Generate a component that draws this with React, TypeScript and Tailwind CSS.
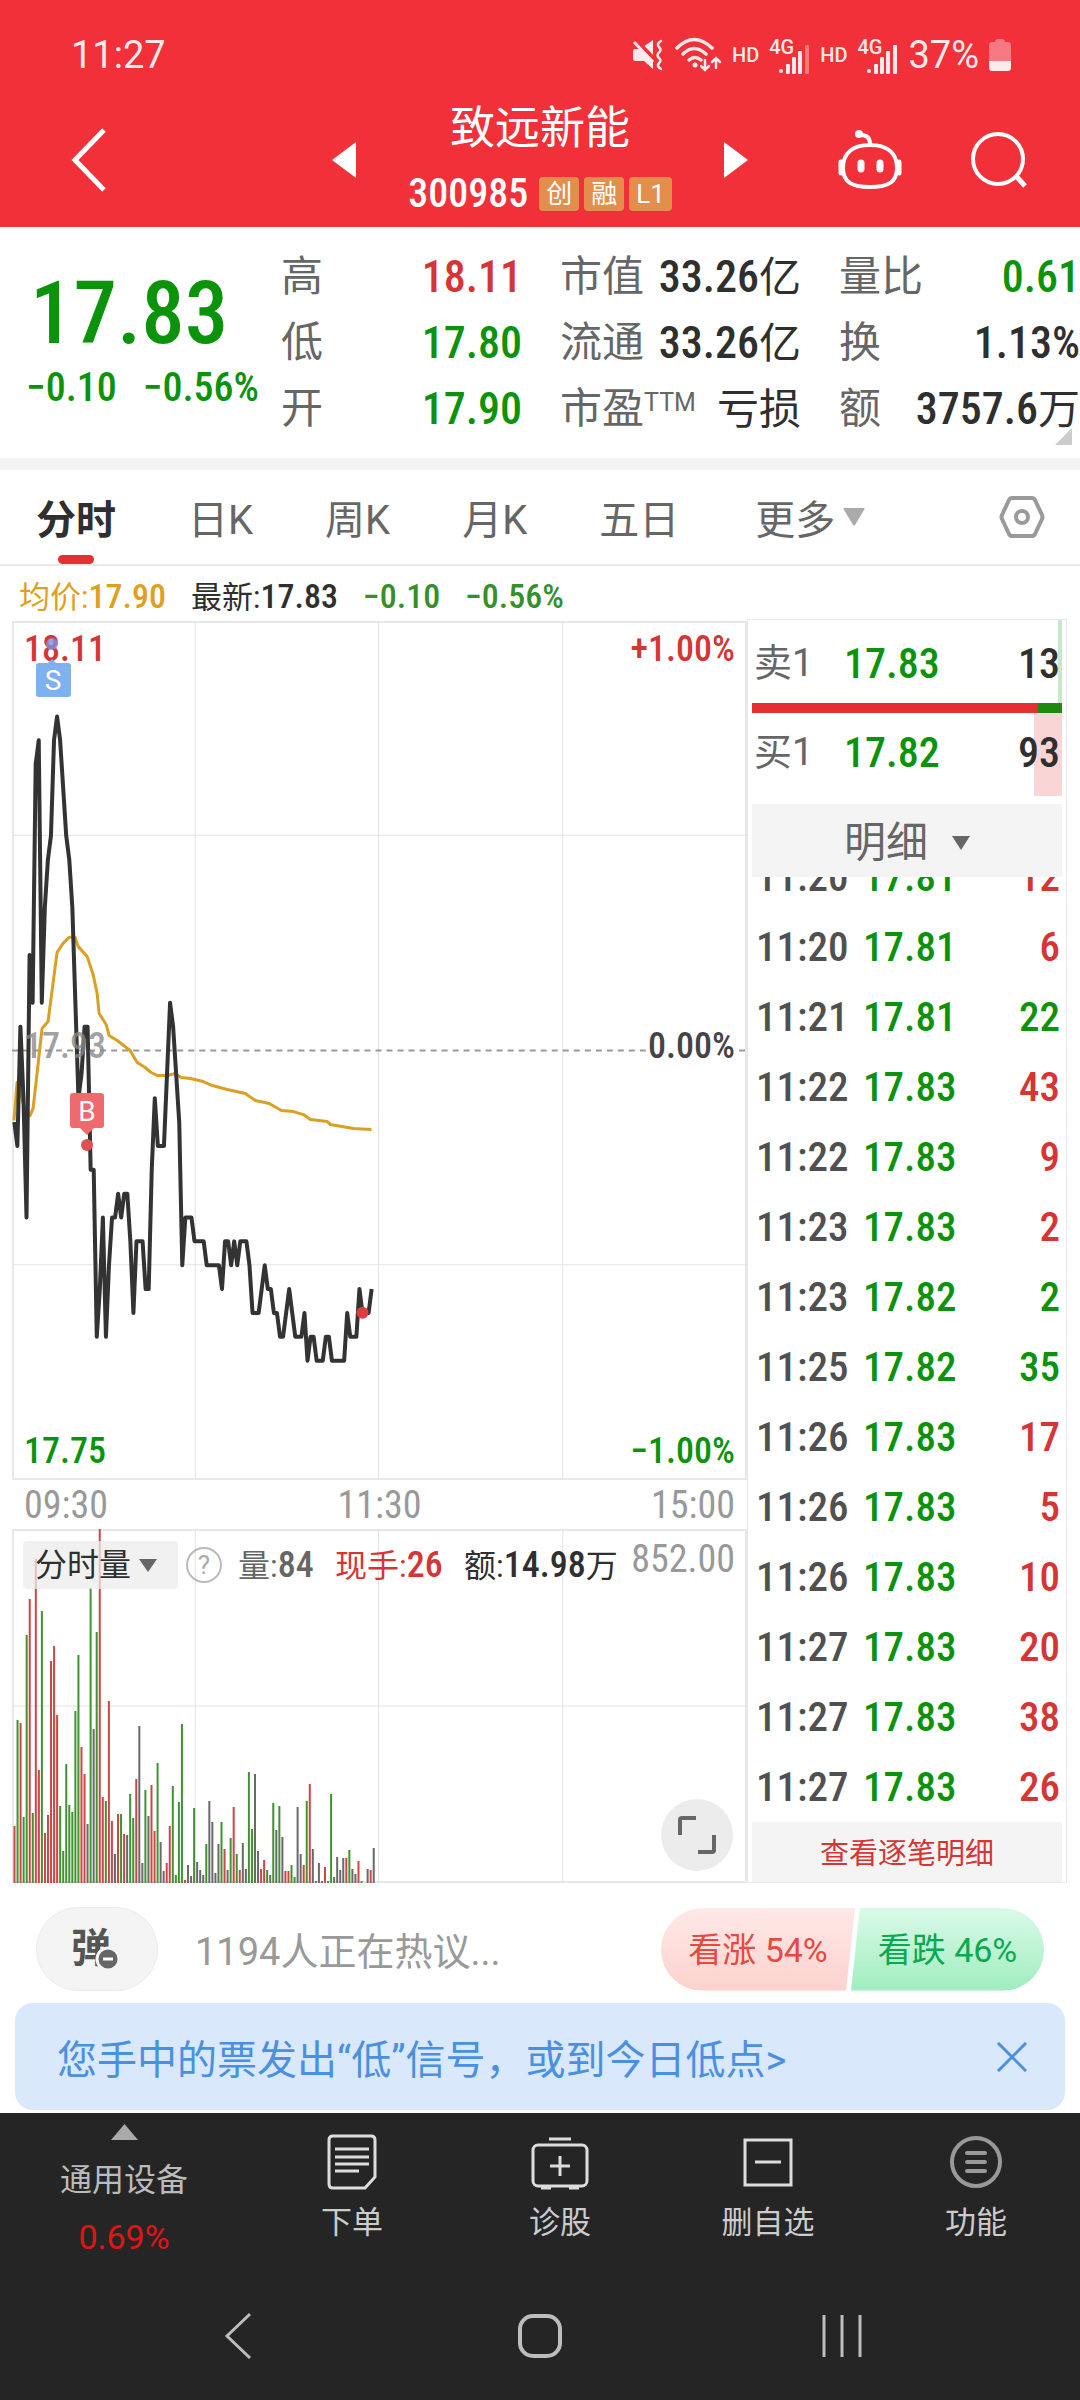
import React, { useState } from 'react';
import { clsx } from 'clsx';

type Tone = 'up' | 'down' | 'flat';

interface Quote {
    label: string;
    sup?: string;
    value: string;
    unit?: string;
    tone: Tone;
}

interface Trade {
    time: string;
    price: string;
    qty: number;
    tone: Tone;
}

const NUM = "font-['Roboto_Condensed','Roboto','Noto_Sans_CJK_SC',sans-serif]";

const toneClass: Record<Tone, string> = {
    up: 'text-[#d63535]',
    down: 'text-[#0b930b]',
    flat: 'text-[#2f2f2f]',
};

const quoteColumns: Quote[][] = [
    [
        { label: '高', value: '18.11', tone: 'up' },
        { label: '低', value: '17.80', tone: 'down' },
        { label: '开', value: '17.90', tone: 'down' },
    ],
    [
        { label: '市值', value: '33.26', unit: '亿', tone: 'flat' },
        { label: '流通', value: '33.26', unit: '亿', tone: 'flat' },
        { label: '市盈', sup: 'TTM', value: '', unit: '亏损', tone: 'flat' },
    ],
    [
        { label: '量比', value: '0.61', tone: 'down' },
        { label: '换', value: '1.13%', tone: 'flat' },
        { label: '额', value: '3757.6', unit: '万', tone: 'flat' },
    ],
];

const tabs = ['分时', '日K', '周K', '月K', '五日'];

const trades: Trade[] = [
    { time: '11:20', price: '17.81', qty: 12, tone: 'up' },
    { time: '11:20', price: '17.81', qty: 6, tone: 'up' },
    { time: '11:21', price: '17.81', qty: 22, tone: 'down' },
    { time: '11:22', price: '17.83', qty: 43, tone: 'up' },
    { time: '11:22', price: '17.83', qty: 9, tone: 'up' },
    { time: '11:23', price: '17.83', qty: 2, tone: 'up' },
    { time: '11:23', price: '17.82', qty: 2, tone: 'down' },
    { time: '11:25', price: '17.82', qty: 35, tone: 'down' },
    { time: '11:26', price: '17.83', qty: 17, tone: 'up' },
    { time: '11:26', price: '17.83', qty: 5, tone: 'up' },
    { time: '11:26', price: '17.83', qty: 10, tone: 'up' },
    { time: '11:27', price: '17.83', qty: 20, tone: 'up' },
    { time: '11:27', price: '17.83', qty: 38, tone: 'up' },
    { time: '11:27', price: '17.83', qty: 26, tone: 'up' },
];

// One price per minute from 09:30, in cents
const prices = [
    1790, 1789, 1794, 1791, 1786, 1797, 1795, 1805, 1806, 1795, 1799, 1801, 1802, 1806, 1807, 1806, 1804, 1802, 1801, 1799,
    1795, 1791, 1792, 1794, 1794, 1788, 1788, 1781, 1783, 1786, 1781, 1784, 1786, 1786, 1787, 1786, 1787, 1787, 1785, 1782,
    1785, 1785, 1785, 1783, 1783, 1788, 1791, 1789, 1789, 1789, 1792, 1795, 1794, 1792, 1790, 1784, 1786, 1786, 1786, 1785,
    1785, 1785, 1785, 1784, 1784, 1784, 1784, 1784, 1783, 1785, 1785, 1784, 1785, 1784, 1785, 1785, 1785, 1784, 1782, 1782,
    1782, 1783, 1784, 1783, 1783, 1782, 1782, 1781, 1781, 1782, 1783, 1782, 1781, 1781, 1781, 1782, 1780, 1781, 1781, 1780,
    1780, 1780, 1781, 1781, 1780, 1780, 1780, 1780, 1780, 1782, 1781, 1781, 1781, 1783, 1782, 1782, 1782, 1783,
];

const average =
    '2,499 5,461 8,469 13,489 18,494 21,487 24,461 30,407 36,400 45,331 51,322 57,316 63,316 66,325 75,335 81,353 85,372 87,392 94,403 97,414 105,419 118,429 125,441 133,446 139,451 145,454 155,454 163,452 169,456 178,457 191,460 200,464 215,468 233,472 243,479 257,482 269,489 281,490 291,493 298,498 315,500 318,503 341,507 359,508';

// r = up, g = down, d = unchanged
const volumes = (
    'r57 g163 r160 g66 g248 r284 g70 r324 r113 g272 r50 r68 r222 r237 r168 g77 g32 g119 g78 g71 ' +
    'g172 g228 r136 r109 d59 g295 d154 g251 r355 r86 g82 r182 r62 d29 r69 g69 r49 d48 g89 g65 ' +
    'r104 d157 d20 g93 d67 r98 r52 g120 d41 d12 r20 r57 g97 g8 g81 g159 r3 d18 d7 g75 ' +
    'd21 d13 d8 g39 d82 d61 d10 d39 g61 r34 d13 g45 r76 g29 r13 d40 d14 g111 g54 d109 ' +
    'd32 r14 r23 g13 d8 g80 d53 g77 d46 r12 r12 g18 g6 d76 d29 r18 g82 r99 d34 d2 ' +
    'd20 d2 r16 g2 g89 d6 d26 d13 d25 r25 g33 d14 d9 r22 g2 d0 d14 r13 d35'
).split(' ');

const volumeFill: Record<string, string> = { r: '#d04545', g: '#3f9430', d: '#6a6a6a' };

const StatusBar = () => (
    <div className="h-[110px] pl-[71px] pr-[69px] flex items-center justify-between text-[#ffe9ea]">
        <span className="text-[38px] leading-none">11:27</span>
        <div className="flex items-center gap-[10px]">
            <svg width="32" height="32" viewBox="0 0 32 32" fill="currentColor">
                <path d="M1 12q0-2 2-2h5L21 1v29l-9-8H3q-2 0-2-2z" />
                <path d="M3 0l19 20" stroke="#f13039" strokeWidth="4" />
                <path d="M2 3l19 20" stroke="currentColor" strokeWidth="3" />
                <path d="M29 2q-5 3-2 6 3 3 0 5.500-3 2.500 0 5.500 3 2.500 0 5-3 3 2 6" fill="none" stroke="currentColor" strokeWidth="2.500" strokeLinecap="round" />
            </svg>
            <svg width="48" height="36" viewBox="0 0 48 36" fill="none" stroke="currentColor" strokeWidth="3.500" strokeLinecap="round">
                <path d="M3 11q17-17 35 0M9 17q11-11 23 0M15 23q6-5 12 0" />
                <circle cx="21" cy="28" r="2.500" fill="currentColor" stroke="none" />
                <path d="M31 23v10m-4-4l4 4 4-4M42 31V21m-4 4l4-4 4 4" strokeWidth="2.500" />
            </svg>
            <span className="text-[20px] leading-none font-medium">HD</span>
            <Signal weak />
            <span className="text-[20px] leading-none font-medium">HD</span>
            <Signal />
            <span className="text-[38px] leading-none">37%</span>
            <svg width="22" height="32" viewBox="0 0 22 32">
                <path d="M6 3q0-3 3-3h4q3 0 3 3h3q3 0 3 3v16H0V6q0-3 3-3z" fill="#f67880" />
                <path d="M0 22h22v7q0 3-3 3H3q-3 0-3-3z" fill="currentColor" />
            </svg>
        </div>
    </div>
);

const Signal: React.FC<{ weak?: boolean }> = ({ weak }) => (
    <div className="flex items-end h-[40px]">
        <span className="self-start text-[20px] leading-[24px] font-medium">4G</span>
        <svg className="-ml-[15px]" width="31" height="36" viewBox="9 0 31 36" fill="currentColor">
            <rect x="9" y="30" width="4" height="4" rx="2" />
            <rect x="16" y="25" width="4" height="10" rx="1" />
            <rect x="22" y="18" width="4" height="17" rx="1" />
            <rect x="28" y="12" width="4" height="23" rx="1" />
            <rect x="35" y="6" width="4" height="29" rx="1" opacity={weak ? 0.4 : 1} />
        </svg>
    </div>
);

const Header = () => (
    <header className="bg-[#f13039] text-white">
        <StatusBar />
        <div className="h-[117px] flex items-center justify-between pl-[69px] pr-[51px] pb-[18px]">
            <div className="w-[178px]">
                <button aria-label="返回" className="block">
                    <svg width="40" height="66" viewBox="0 0 40 66" fill="none" stroke="currentColor" strokeWidth="5">
                        <path d="M35 3L6 33l29 30" />
                    </svg>
                </button>
            </div>
            <div className="flex items-center justify-between w-[416px]">
                <button aria-label="上一只">
                    <svg width="24" height="36" viewBox="0 0 24 36" fill="currentColor"><path d="M24 0v36L0 18z" /></svg>
                </button>
                <div className="flex flex-col items-center pt-[2px]">
                    <h1 className="text-[45px] leading-[66px]">致远新能</h1>
                    <div className="flex items-center gap-[5px] h-[64px]">
                        <span className={clsx(NUM, 'text-[40px] leading-none font-medium mr-[6px]')}>300985</span>
                        {['创', '融', 'L1'].map((tag) => (
                            <span key={tag} className="h-[34px] px-[7px] rounded-sm bg-[#e38f4b] text-[26px] leading-[34px]">{tag}</span>
                        ))}
                    </div>
                </div>
                <button aria-label="下一只">
                    <svg width="24" height="36" viewBox="0 0 24 36" fill="currentColor"><path d="M0 0v36l24-18z" /></svg>
                </button>
            </div>
            <div className="flex items-center justify-end gap-[66px] w-[196px]">
                <button aria-label="助手">
                    <svg width="66" height="60" viewBox="0 0 66 60" fill="none" stroke="currentColor" strokeWidth="4">
                        <path d="M33 15c17 0 27 8 27 23S50 57 33 57 6 53 6 38s10-23 27-23zM33 14c0-6-3-9-9-9" />
                        <circle cx="22" cy="4" r="4" fill="currentColor" stroke="none" />
                        <path d="M4 32v11M62 32v11" strokeWidth="5" strokeLinecap="round" />
                        <path d="M24 33v6M43 33v6" strokeWidth="7" strokeLinecap="round" />
                    </svg>
                </button>
                <button aria-label="搜索">
                    <svg width="60" height="60" viewBox="0 0 60 60" fill="none" stroke="currentColor" strokeWidth="4">
                        <circle cx="29" cy="29" r="25" />
                        <path d="M47 46l9 10" strokeWidth="5" />
                    </svg>
                </button>
            </div>
        </div>
    </header>
);

const QuoteSummary = () => (
    <section className="relative flex h-[231px] pt-[17px]">
        <div className={clsx(NUM, 'w-[281px] pl-[26px] text-[#0b930b] font-medium')}>
            <div className="pl-[4px] pt-[22px] text-[87px] leading-[94px]">17.83</div>
            <div className="flex gap-[26px] text-[40px] leading-[56px]">
                <span>−0.10</span>
                <span>−0.56%</span>
            </div>
        </div>
        <div className="flex-1 grid grid-cols-3 gap-x-[38px]">
            {quoteColumns.map((col, i) => (
                <dl key={i}>
                    {col.map((q) => (
                        <div key={q.label} className="flex items-center justify-between h-[66px] whitespace-nowrap">
                            <dt className="text-[42px] leading-none text-[#666]">
                                {q.label}
                                {q.sup && <sup className="text-[25px] -top-3">{q.sup}</sup>}
                            </dt>
                            <dd className={clsx(NUM, 'text-[44px] leading-none font-medium', toneClass[q.tone])}>
                                {q.value}
                                {q.unit && <span className="text-[42px] font-normal">{q.unit}</span>}
                            </dd>
                        </div>
                    ))}
                </dl>
            ))}
        </div>
        <svg className="absolute right-2 bottom-[13px]" width="17" height="17" viewBox="0 0 17 17"><path d="M17 0v17H0z" fill="#ccc" /></svg>
    </section>
);

const TabBar: React.FC<{ active: string; onChange: (t: string) => void }> = ({ active, onChange }) => (
    <nav className="flex items-stretch h-[96px] pl-[36px] pr-[35px] border-b-2 border-[#e8e8e8] text-[40px] text-[#666]">
        <div className="flex flex-1 gap-[72px]">
            {tabs.map((t) => (
                <button
                    key={t}
                    onClick={() => onChange(t)}
                    className={clsx('relative pt-2', t === active && 'font-bold text-[#2f2f2f]')}
                >
                    {t}
                    {t === active && <span className="absolute bottom-0 left-1/2 -ml-[18px] w-9 h-[9px] rounded-full bg-[#e6302f]" />}
                </button>
            ))}
            <button className="flex items-center gap-2 ml-1 pt-2">
                更多
                <svg className="mb-2" width="22" height="18" viewBox="0 0 22 18"><path d="M1 0h20q1 0 .5 1L12 17q-1 1-2 0L.5 1Q0 0 1 0z" fill="#aaa" /></svg>
            </button>
        </div>
        <button aria-label="设置">
            <svg width="46" height="44" viewBox="0 0 46 44" fill="none" stroke="#9a9a9a" strokeWidth="4">
                <path d="M13 3h20q2 0 3 2l7 15q1 2 0 4l-7 15q-1 2-3 2H13q-2 0-3-2L3 24q-1-2 0-4l7-15q1-2 3-2z" />
                <circle cx="23" cy="22" r="6" />
            </svg>
        </button>
    </nav>
);

const PriceChart = () => {
    const line = prices.map((p, m) => `${2.3 + m * 3.05},${429 + (1793 - p) * 23.83}`).join(' ');

    return (
        <div className={clsx(NUM, 'relative text-[36px] leading-none font-medium')}>
            <svg className="block w-full h-[859px]" viewBox="0 0 734 858" preserveAspectRatio="none" fill="none">
                <rect x="1" y="1" width="732" height="856" stroke="#e8e8e8" strokeWidth="2" />
                <path d="M183 0v858M366 0v858M550 0v858M0 214h734M0 643h734" stroke="#e3e3e3" strokeWidth="1" />
                <path d="M0 429h734" stroke="#999" strokeWidth="2" strokeDasharray="6 5" />
                <polyline points={average} stroke="#dba023" strokeWidth="3" strokeLinejoin="round" />
                <polyline points={line} stroke="#333" strokeWidth="4" strokeLinejoin="round" />
                <circle cx="350" cy="691" r="6" fill="#e03c3c" />
            </svg>
            <span className="absolute left-3 top-[10px] text-[#d63535]">18.11</span>
            <span className="absolute right-3 top-[10px] text-[#d63535]">+1.00%</span>
            <span className="absolute left-3 top-[407px] text-[#888]/80">17.93</span>
            <span className="absolute right-3 top-[407px] text-[#444] bg-white">0.00%</span>
            <span className="absolute left-3 bottom-[11px] text-[#0b930b]">17.75</span>
            <span className="absolute right-3 bottom-[11px] text-[#0b930b]">−1.00%</span>
            <svg className="absolute left-0 top-0" width="120" height="540" viewBox="0 0 120 540" fontFamily="Roboto" fontSize="28">
                <circle cx="40" cy="23" r="6" fill="#7f8fe0" opacity=".8" />
                <path d="M34 44l6-6 6 6z" fill="#7fb0f0" />
                <rect x="24" y="42" width="35" height="34" rx="3" fill="#7fb0f0" />
                <text x="41" y="69" textAnchor="middle" fontWeight="400" fill="#fff">S</text>
                <rect x="58" y="472" width="34" height="35" rx="3" fill="#ee6a6d" />
                <path d="M67 506h16l-8 8z" fill="#ee6a6d" />
                <text x="75" y="500" textAnchor="middle" fontWeight="400" fill="#fff">B</text>
                <circle cx="75" cy="524" r="6" fill="#e05050" />
            </svg>
        </div>
    );
};

const VolumeChart = () => (
    <div className="relative h-[354px]">
        <svg className="absolute inset-0 w-full h-full" viewBox="0 0 734 354" preserveAspectRatio="none">
            <rect x="1" y="1" width="732" height="352" fill="none" stroke="#e8e8e8" strokeWidth="2" />
            <path d="M183 0v354M366 0v354M550 0v354M0 177h734" stroke="#e3e3e3" strokeWidth="1" />
            {volumes.map((v, m) => {
                const h = Number(v.slice(1));
                return <rect key={m} x={1.5 + m * 3.04} y={354 - h} width="2" height={h} fill={volumeFill[v[0]]} />;
            })}
        </svg>
        <div className="relative flex items-center pt-[11px] pl-[11px] pr-3 text-[32px] leading-none whitespace-nowrap">
            <button className="flex items-center gap-2 h-[48px] w-[155px] px-3 rounded bg-[#ececec]/75 text-[#2f2f2f]">
                分时量
                <svg width="18" height="13" viewBox="0 0 18 13"><path d="M0 0h18L9 13z" fill="#666" /></svg>
            </button>
            <button aria-label="说明" className="ml-2 size-9 rounded-full border-2 border-[#bbb] text-[26px] text-[#aaa]">?</button>
            <div className="flex-1 flex items-center justify-between ml-4">
                <span className="text-[#666]">量:<b className={clsx(NUM, 'text-[36px] font-medium')}>84</b></span>
                <span className="text-[#d63535]">现手:<b className={clsx(NUM, 'text-[36px] font-medium')}>26</b></span>
                <span className="text-[#2f2f2f]">额:<b className={clsx(NUM, 'text-[36px] font-medium')}>14.98</b>万</span>
                <span className={clsx(NUM, 'text-[38px] text-[#999] -ml-2 pb-3')}>852.00</span>
            </div>
        </div>
        <button aria-label="全屏" className="absolute right-[14px] bottom-3 size-[72px] rounded-full bg-[#ececec] flex items-center justify-center">
            <svg width="40" height="40" viewBox="0 0 40 40" fill="none" stroke="#666" strokeWidth="4">
                <path d="M3 20V5q0-2 2-2h14M37 20v15q0 2-2 2H21" />
            </svg>
        </button>
    </div>
);

const OrderBook = () => (
    <aside className="w-[320px] mr-[13px] -mt-[2px] px-[4px] border border-[#e8e8e8]">
        <div className="flex items-center h-[83px] pt-1 pl-[2px] border-r-4 border-[#cbe7cb] text-[#666]">
            <span className="w-[90px] text-[38px]">卖1</span>
            <span className={clsx(NUM, 'flex-1 text-[42px] font-medium text-[#0b930b]')}>17.83</span>
            <span className={clsx(NUM, 'text-[42px] -mr-[2px] font-medium text-[#2f2f2f]')}>13</span>
        </div>
        <div className="flex h-[10px]">
            <div className="flex-1 bg-[#e6302f]" />
            <div className="w-6 bg-[#1e8a10]" />
        </div>
        <div className="flex items-center h-[83px] pl-[2px] pr-[2px] bg-[linear-gradient(#f9d5d5,#f9d5d5)] bg-[length:28px_100%] bg-right bg-no-repeat text-[#666]">
            <span className="w-[90px] pb-1 text-[38px]">买1</span>
            <span className={clsx(NUM, 'flex-1 pb-1 text-[42px] font-medium text-[#0b930b]')}>17.82</span>
            <span className={clsx(NUM, 'pb-1 text-[42px] font-medium text-[#2f2f2f]')}>93</span>
        </div>
        <button className="mt-2 w-full h-[73px] pt-1 flex items-center justify-center gap-6 bg-[#f4f4f4] text-[42px] text-[#666]">
            明细
            <svg width="18" height="14" viewBox="0 0 18 14"><path d="M0 0h18L9 14z" fill="#666" /></svg>
        </button>
        <div className="h-[945px] overflow-hidden flex flex-col justify-end">
            <table className={clsx(NUM, 'w-full text-[41px] leading-none font-medium')}>
                <tbody>
                    {trades.map((t, i) => (
                        <tr key={i} className="h-[70px]">
                            <td className="w-[111px] pl-1 text-[#505050]">{t.time}</td>
                            <td className="text-[#0b930b]">{t.price}</td>
                            <td className={clsx('pr-[2px] text-right', toneClass[t.tone])}>{t.qty}</td>
                        </tr>
                    ))}
                </tbody>
            </table>
        </div>
        <a href="#detail" className="block h-[60px] bg-[#f4f4f4] text-center text-[29px] leading-[64px] text-[#d63535]">查看逐笔明细</a>
    </aside>
);

const Discussion = () => (
    <section className="flex items-center h-[120px] px-[36px] pt-[13px] pb-[1px]">
        <button aria-label="弹幕" className="relative w-[122px] h-[84px] pr-3 rounded-full border border-[#ececec] bg-[#f4f4f4] text-[40px] font-bold text-[#555]">
            弹
            <svg className="absolute left-[58px] top-[38px]" width="26" height="26" viewBox="0 0 26 26">
                <circle cx="13" cy="13" r="11" fill="#666" stroke="#f4f4f4" strokeWidth="3" />
                <path d="M8 13h10" stroke="#fff" strokeWidth="3" />
            </svg>
        </button>
        <span className="flex-1 pl-[37px] pt-[6px] text-[38px] text-[#999]">1194人正在热议...</span>
        <button className="w-[194px] h-[83px] pt-[3px] rounded-l-full bg-linear-to-b from-[#fee9e8] to-[#fcd2cd] [clip-path:polygon(0_0,100%_0,calc(100%-9px)_100%,0_100%)] text-[34px] text-[#e64a3f]">
            看涨 54%
        </button>
        <button className="w-[193px] h-[83px] pt-[3px] -ml-1 rounded-r-full bg-linear-to-b from-[#dafae9] to-[#9eedbf] [clip-path:polygon(9px_0,100%_0,100%_100%,0_100%)] text-[34px] text-[#0aa84f]">
            看跌 46%
        </button>
    </section>
);

const SignalBanner: React.FC<{ onClose: () => void }> = ({ onClose }) => (
    <div className="flex items-center justify-between h-[107px] mx-[15px] mb-[3px] pl-[42px] pr-[38px] rounded-[18px] bg-[#d9e8fb] text-[#4a90e2]">
        <a href="#signal" className="pt-2 text-[40px]">您手中的票发出“低”信号，或到今日低点&gt;</a>
        <button aria-label="关闭" onClick={onClose}>
            <svg width="30" height="30" viewBox="0 0 30 30" stroke="currentColor" strokeWidth="3"><path d="M1 1l28 28M29 1L1 29" /></svg>
        </button>
    </div>
);

const actions = [
    {
        label: '下单',
        icon: (
            <svg width="58" height="56" viewBox="0 0 58 56" fill="none" stroke="#ddd" strokeWidth="3">
                <path d="M10 2h38q4 0 4 4v37L42 54H10q-4 0-4-4V6q0-4 4-4z" />
                <path d="M12 15h34M12 23h34M12 30h34M12 37h24" />
            </svg>
        ),
    },
    {
        label: '诊股',
        icon: (
            <svg width="58" height="56" viewBox="0 0 58 56" fill="none" stroke="#ddd" strokeWidth="3">
                <rect x="2" y="11" width="54" height="41" rx="5" />
                <path d="M18 5h22M29 22v20M19 32h20M10 54h10M38 54h10" />
            </svg>
        ),
    },
    {
        label: '删自选',
        icon: (
            <svg width="58" height="56" viewBox="0 0 58 56" fill="none" stroke="#ddd" strokeWidth="3">
                <path d="M6 6h46v45H6zM16 28h26" />
            </svg>
        ),
    },
    {
        label: '功能',
        icon: (
            <svg width="58" height="56" viewBox="0 0 58 56" fill="none" stroke="#999" strokeWidth="4">
                <circle cx="29" cy="28" r="24" />
                <path d="M20 19h18M20 28h18M20 37h18" strokeLinecap="round" />
            </svg>
        ),
    },
];

const BottomBar = () => (
    <footer className="bg-[#252525] text-[#ccc]">
        <div className="flex h-[160px]">
            <button className="w-[248px] flex flex-col items-center pt-[11px] text-[32px] text-[#bbb]">
                <svg width="27" height="16" viewBox="0 0 27 16"><path d="M13.500 0L27 16H0z" fill="#aaa" /></svg>
                <span className="mt-[17px] leading-[46px]">通用设备</span>
                <span className="mt-[11px] text-[34px] leading-[46px] text-[#e01414]">0.69%</span>
            </button>
            {actions.map((a) => (
                <button key={a.label} className="flex-1 flex flex-col items-center pt-[21px] text-[31px]">
                    {a.icon}
                    <span className="mt-[10px] leading-[46px]">{a.label}</span>
                </button>
            ))}
        </div>
        {/* System navigation */}
        <div className="flex h-[127px] px-[87px] pt-[39px] items-start text-[#bdbdbd]">
            <button aria-label="后退" className="flex-1 flex justify-center">
                <svg width="28" height="48" viewBox="0 0 28 48" fill="none" stroke="currentColor" strokeWidth="3"><path d="M26 2L3 24l23 22" /></svg>
            </button>
            <button aria-label="主页" className="flex-1 flex justify-center">
                <svg width="48" height="48" viewBox="0 0 48 48" fill="none" stroke="currentColor" strokeWidth="4"><rect x="4" y="4" width="40" height="40" rx="13" /></svg>
            </button>
            <button aria-label="最近" className="flex-1 flex justify-center">
                <svg width="42" height="48" viewBox="0 0 42 48" stroke="currentColor" strokeWidth="3"><path d="M3 3v42M21 3v42M39 3v42" /></svg>
            </button>
        </div>
    </footer>
);

const App: React.FC = () => {
    const [tab, setTab] = useState('分时');
    const [showSignal, setShowSignal] = useState(true);

    return (
        <div className="min-h-screen flex flex-col bg-white overflow-hidden font-['Roboto','Noto_Sans_CJK_SC',sans-serif]">
            <Header />
            <QuoteSummary />
            <div className="h-3 bg-[#f4f4f4]" />
            <TabBar active={tab} onChange={setTab} />

            <div className="flex items-center gap-[25px] h-[55px] pt-1 pl-[19px] text-[31px] leading-none">
                <span className="text-[#e0a01e]">均价:<b className={clsx(NUM, 'text-[34px] font-medium')}>17.90</b></span>
                <span className="text-[#2f2f2f]">最新:<b className={clsx(NUM, 'text-[34px] font-medium')}>17.83</b></span>
                <b className={clsx(NUM, 'text-[34px] font-medium text-[#35902a]')}>−0.10</b>
                <b className={clsx(NUM, 'text-[34px] font-medium text-[#35902a]')}>−0.56%</b>
            </div>

            <main className="flex">
                <div className="flex-1 pl-[12px]">
                    <PriceChart />
                    <div className={clsx(NUM, 'flex items-center justify-between h-[49px] px-3 text-[38px] leading-none text-[#999]')}>
                        <span>09:30</span>
                        <span>11:30</span>
                        <span>15:00</span>
                    </div>
                    <VolumeChart />
                </div>
                <OrderBook />
            </main>

            <Discussion />
            {showSignal && <SignalBanner onClose={() => setShowSignal(false)} />}
            <div className="flex-1" />
            <BottomBar />
        </div>
    );
};

export default App;
